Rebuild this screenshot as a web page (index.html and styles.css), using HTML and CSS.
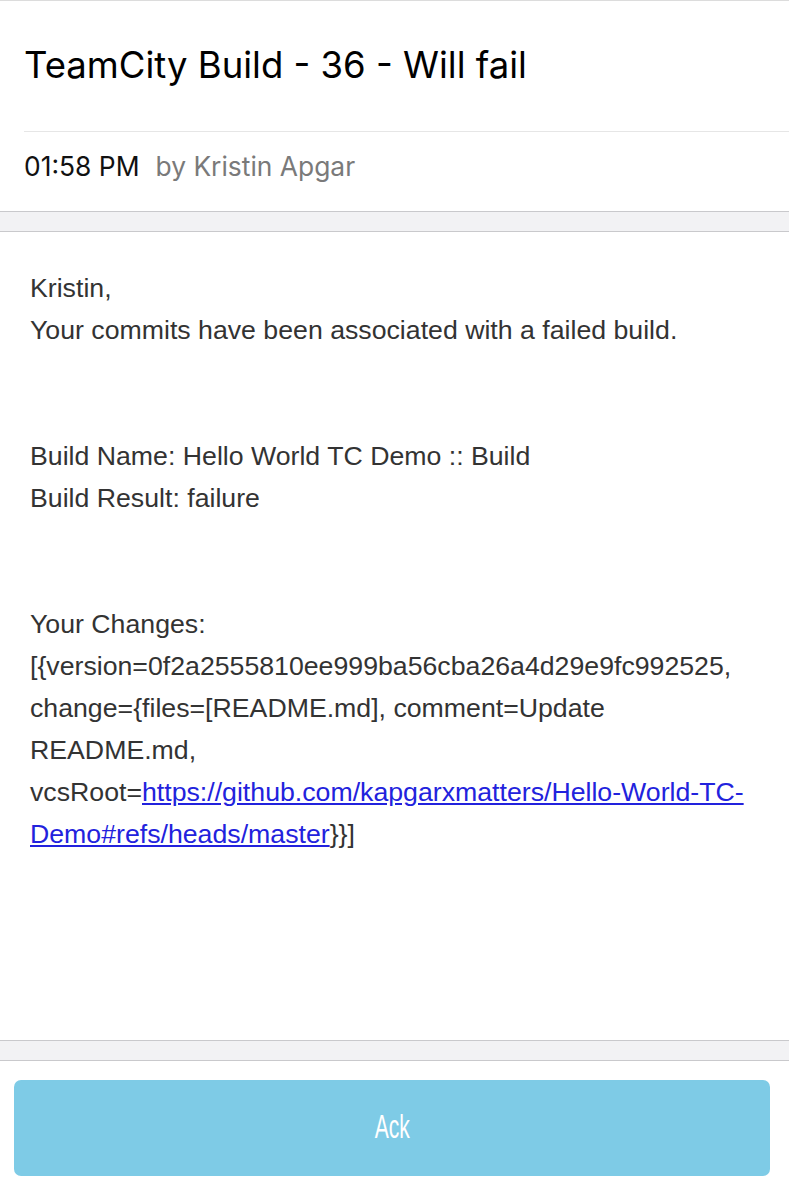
FILE: index.html
```html
<!DOCTYPE html>
<html lang="en">
<head>
<meta charset="utf-8">
<title>TeamCity Build - 36 - Will fail</title>
<link rel="stylesheet" href="styles.css">
</head>
<body>
  <div class="page">
    <header class="header">
      <div class="title-row">
        <h1 class="title">TeamCity Build - 36 - Will fail</h1>
      </div>
      <div class="meta-row">
        <span class="time">01:58 PM</span>
        <span class="author">by Kristin Apgar</span>
      </div>
    </header>
    <div class="band"></div>
    <main class="content">
      <p class="message">Kristin,<br>Your commits have been associated with a failed build.<br><br><br>Build Name: Hello World TC Demo :: Build<br>Build Result: failure<br><br><br>Your Changes:<br>[{version=0f2a2555810ee999ba56cba26a4d29e9fc992525,<br>change={files=[README.md], comment=Update<br>README.md,<br>vcsRoot=<a class="link" href="#">https://github.com/kapgarxmatters/Hello-World-TC-<br>Demo#refs/heads/master</a>}}]</p>
    </main>
    <footer class="footer">
      <div class="band"></div>
      <div class="actions">
        <button class="ack-btn" type="button"><span class="ack-label">Ack</span></button>
      </div>
    </footer>
  </div>
</body>
</html>
```
FILE: styles.css
```css
html, body {
  margin: 0;
  padding: 0;
  height: 100%;
  background: #ffffff;
}

.page {
  display: flex;
  flex-direction: column;
  height: 100%;
  box-sizing: border-box;
  border-top: 1px solid #dcdcdc;
}

.header {
  display: flex;
  flex-direction: column;
}

.title-row {
  margin-left: 24px;
  height: 130px;
  display: flex;
  align-items: center;
  border-bottom: 1px solid #e6e6e6;
}

.title {
  margin: 0;
  font-family: Inter, "Liberation Sans", sans-serif;
  font-weight: 400;
  font-size: 36.5px;
  line-height: 1.2;
  color: #000000;
}

.meta-row {
  height: 79px;
  box-sizing: border-box;
  padding: 19px 24px 0;
  display: flex;
  align-items: flex-start;
  gap: 16px;
  font-family: Inter, "Liberation Sans", sans-serif;
  font-size: 26.4px;
  line-height: 1.2;
}

.time {
  color: #111111;
}

.author {
  color: #7a7a7a;
}

.band {
  height: 19px;
  background: #f2f2f4;
  border-top: 1px solid #c9c9cc;
  border-bottom: 1px solid #c9c9cc;
  flex: none;
}

.content {
  flex: 1;
  padding: 35px 30px 0;
  overflow: hidden;
}

.message {
  margin: 0;
  font-family: "Liberation Sans", Arial, sans-serif;
  font-size: 26.7px;
  line-height: 42px;
  color: #333333;
  white-space: nowrap;
}

.link {
  color: #2222dd;
  text-decoration: underline;
}

.footer {
  flex: none;
}

.actions {
  padding: 19px 19px 14px 14px;
}

.ack-btn {
  display: flex;
  align-items: center;
  justify-content: center;
  width: 100%;
  height: 96px;
  border: none;
  border-radius: 7px;
  background: #7ecbe6;
  padding: 0 0 4px;
  cursor: pointer;
}

.ack-label {
  display: inline-block;
  font-family: "Liberation Sans", Arial, sans-serif;
  font-size: 34px;
  color: #ffffff;
  transform: scaleX(0.62);
}
```
